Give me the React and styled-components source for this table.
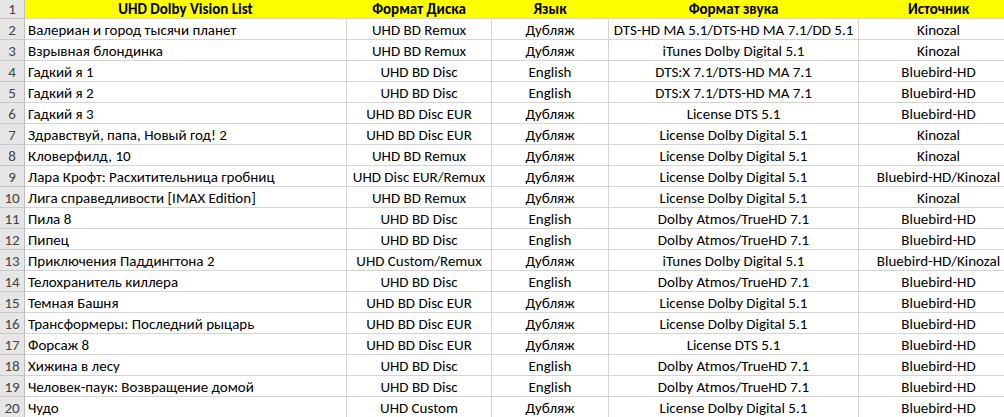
import React from 'react';
import styled, { createGlobalStyle } from 'styled-components';

const GlobalStyle = createGlobalStyle`
  body {
    margin: 0;
    background: #ffffff;
    font-family: Carlito, "Liberation Sans", Arial, sans-serif;
  }
`;

const Sheet = styled.div`
  width: 1004px;
  height: 417px;
  overflow: hidden;
  background: #ffffff;
`;

const Row = styled.div`
  display: grid;
  grid-template-columns: 25px 322px 145px 117px 250px 160px;
  height: ${(props) => (props.header ? '19px' : '21px')};
`;

const RowNum = styled.div`
  background: #e6e6e6;
  border-right: 1px solid #bdbdbd;
  border-bottom: 1px solid #c8c8c8;
  color: #444444;
  font-size: 15px;
  display: flex;
  align-items: flex-end;
  justify-content: center;
  padding-bottom: 0;
  box-sizing: border-box;
`;

const Cell = styled.div`
  box-sizing: border-box;
  border-right: 1px solid ${(props) => (props.header ? '#ffff00' : '#d4d4d4')};
  border-bottom: 1px solid #d4d4d4;
  background: ${(props) => (props.header ? '#ffff00' : '#ffffff')};
  font-size: 15px;
  font-weight: ${(props) => (props.header ? 700 : 400)};
  color: #000000;
  white-space: nowrap;
  overflow: visible;
  display: flex;
  align-items: flex-end;
  justify-content: ${(props) => (props.left ? 'flex-start' : 'center')};
  padding: 0 0 0 ${(props) => (props.left ? '3px' : '0')};
  position: relative;
`;

const Selection = styled.div`
  position: absolute;
  left: -2px;
  right: -1px;
  bottom: -2px;
  height: 2px;
  background: #217346;
`;

const header = ['UHD Dolby Vision List', 'Формат Диска', 'Язык', 'Формат звука', 'Источник'];

const rows = [
  ['Валериан и город тысячи планет', 'UHD BD Remux', 'Дубляж', 'DTS-HD MA 5.1/DTS-HD MA 7.1/DD 5.1', 'Kinozal'],
  ['Взрывная блондинка', 'UHD BD Remux', 'Дубляж', 'iTunes Dolby Digital 5.1', 'Kinozal'],
  ['Гадкий я 1', 'UHD BD Disc', 'English', 'DTS:X 7.1/DTS-HD MA 7.1', 'Bluebird-HD'],
  ['Гадкий я 2', 'UHD BD Disc', 'English', 'DTS:X 7.1/DTS-HD MA 7.1', 'Bluebird-HD'],
  ['Гадкий я 3', 'UHD BD Disc EUR', 'Дубляж', 'License DTS 5.1', 'Bluebird-HD'],
  ['Здравствуй, папа, Новый год! 2', 'UHD BD Disc EUR', 'Дубляж', 'License Dolby Digital 5.1', 'Kinozal'],
  ['Кловерфилд, 10', 'UHD BD Remux', 'Дубляж', 'License Dolby Digital 5.1', 'Kinozal'],
  ['Лара Крофт: Расхитительница гробниц', 'UHD Disc EUR/Remux', 'Дубляж', 'License Dolby Digital 5.1', 'Bluebird-HD/Kinozal'],
  ['Лига справедливости [IMAX Edition]', 'UHD BD Remux', 'Дубляж', 'License Dolby Digital 5.1', 'Kinozal'],
  ['Пила 8', 'UHD BD Disc', 'English', 'Dolby Atmos/TrueHD 7.1', 'Bluebird-HD'],
  ['Пипец', 'UHD BD Disc', 'English', 'Dolby Atmos/TrueHD 7.1', 'Bluebird-HD'],
  ['Приключения Паддингтона 2', 'UHD Custom/Remux', 'Дубляж', 'iTunes Dolby Digital 5.1', 'Bluebird-HD/Kinozal'],
  ['Телохранитель киллера', 'UHD BD Disc', 'English', 'Dolby Atmos/TrueHD 7.1', 'Bluebird-HD'],
  ['Темная Башня', 'UHD BD Disc EUR', 'Дубляж', 'License Dolby Digital 5.1', 'Bluebird-HD'],
  ['Трансформеры: Последний рыцарь', 'UHD BD Disc EUR', 'Дубляж', 'License Dolby Digital 5.1', 'Bluebird-HD'],
  ['Форсаж 8', 'UHD BD Disc EUR', 'Дубляж', 'License DTS 5.1', 'Bluebird-HD'],
  ['Хижина в лесу', 'UHD BD Disc', 'English', 'Dolby Atmos/TrueHD 7.1', 'Bluebird-HD'],
  ['Человек-паук: Возвращение домой', 'UHD BD Disc', 'English', 'Dolby Atmos/TrueHD 7.1', 'Bluebird-HD'],
  ['Чудо', 'UHD Custom', 'Дубляж', 'License Dolby Digital 5.1', 'Bluebird-HD'],
];

export default function App() {
  return (
    <Sheet>
      <GlobalStyle />
      <Row header>
        <RowNum>1</RowNum>
        {header.map((h, i) => (
          <Cell key={i} header>{h}</Cell>
        ))}
      </Row>
      {rows.map((r, ri) => (
        <Row key={ri}>
          <RowNum>{ri + 2}</RowNum>
          {r.map((v, ci) => (
            <Cell key={ci} left={ci === 0}>
              {v}
              {ri === rows.length - 1 && ci === 1 && <Selection />}
            </Cell>
          ))}
        </Row>
      ))}
    </Sheet>
  );
}
